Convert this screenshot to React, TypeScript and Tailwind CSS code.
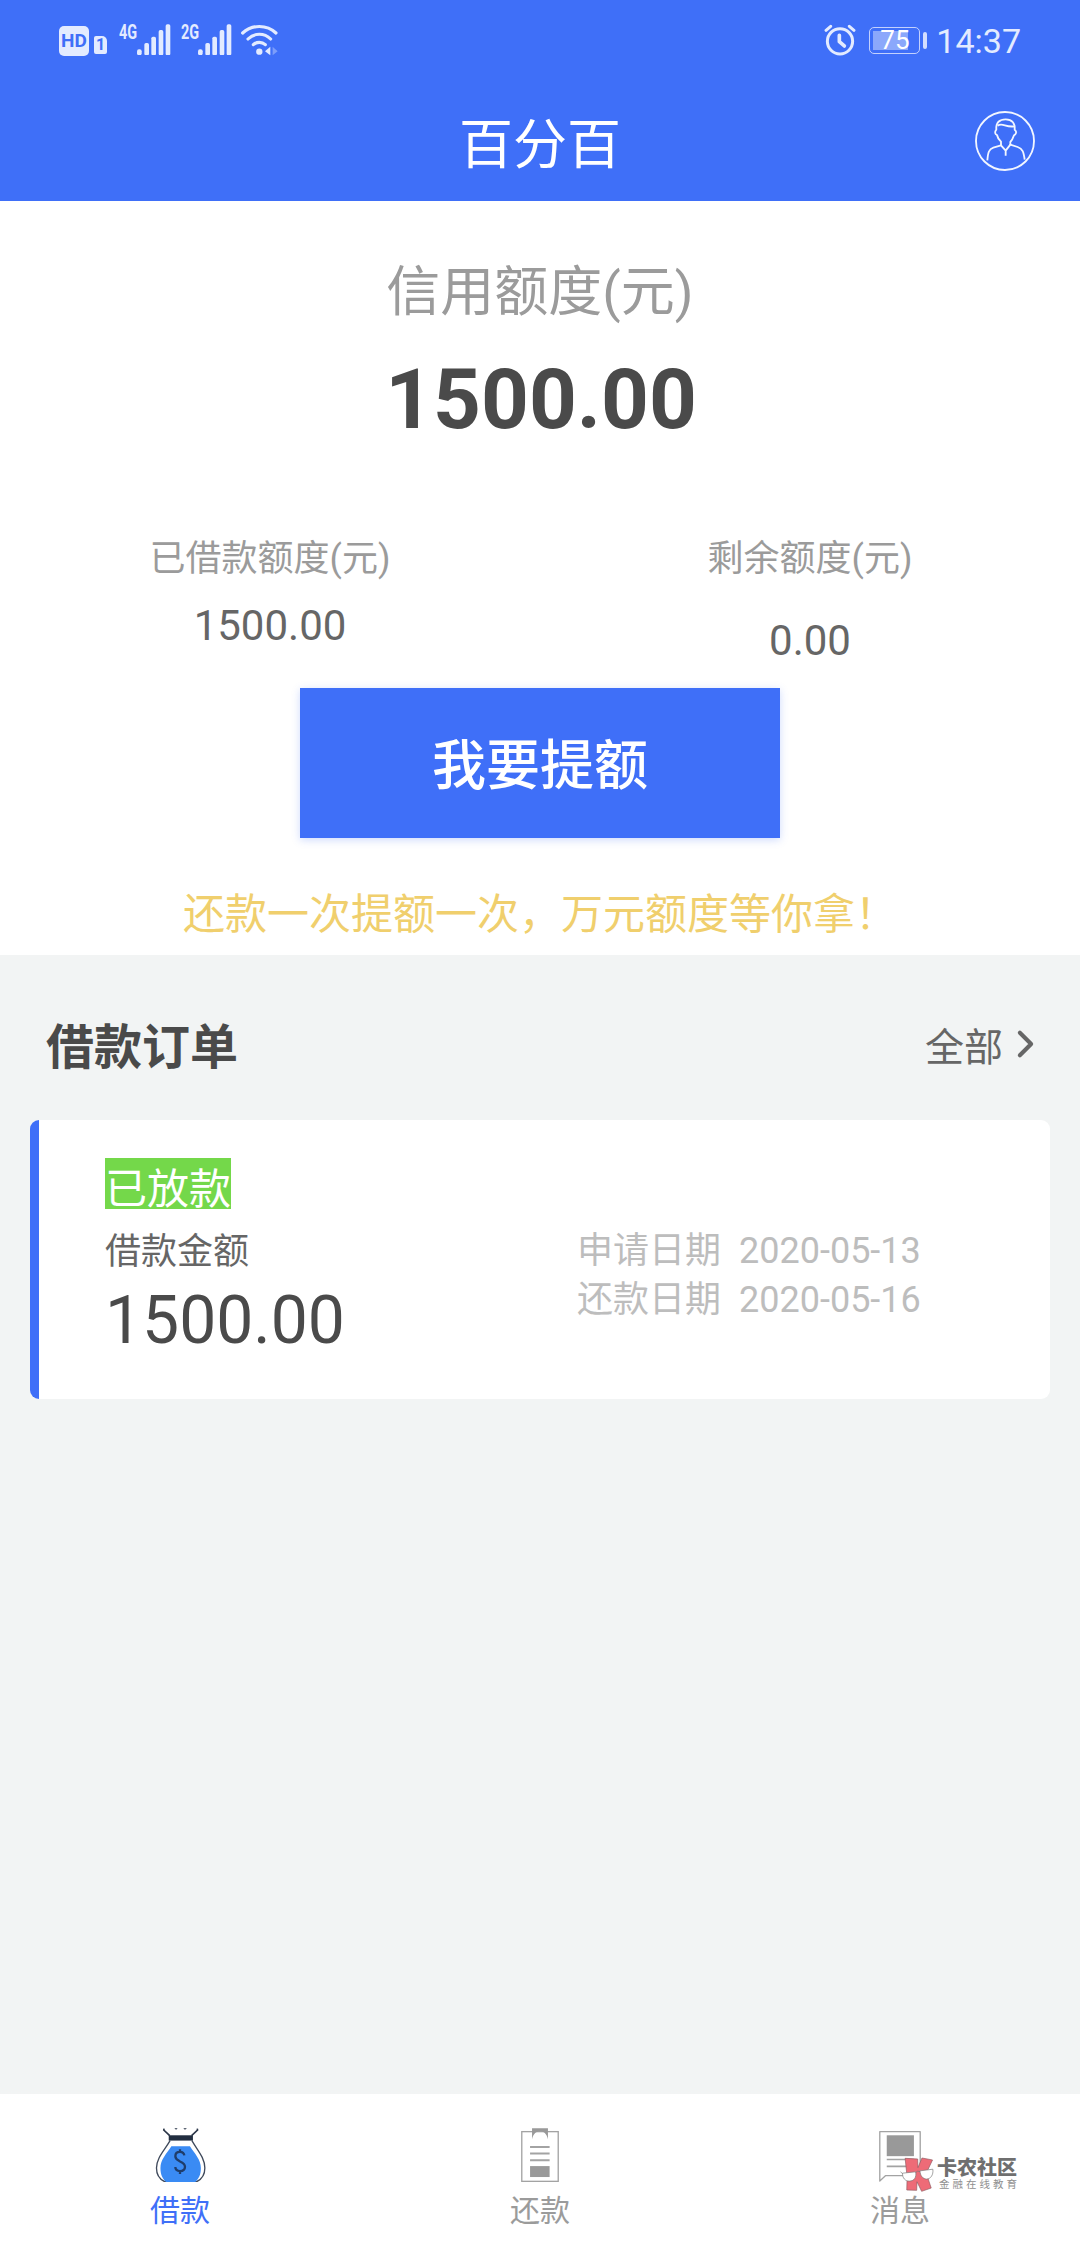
import { ChevronRight } from "lucide-react";

function SignalBars() {
  return (
    <svg viewBox="0 0 102 94" className="w-[34px] h-[31.3px]" fill="#e3ebff">
      <rect x="0" y="76" width="14" height="18" rx="6" />
      <rect x="22" y="57" width="14" height="37" rx="5" />
      <rect x="43" y="38" width="14" height="56" rx="5" />
      <rect x="65" y="18" width="14" height="76" rx="5" />
      <rect x="86" y="1" width="14" height="93" rx="5" />
    </svg>
  );
}

function WifiIcon() {
  return (
    <svg
      viewBox="598 72 112 96"
      className="w-[37.3px] h-[32px]"
      fill="none"
      stroke="#e3ebff"
      strokeWidth="9.5"
      strokeLinecap="round"
    >
      <path d="M603 99 C630 73 676 73 703 99" />
      <path d="M619 117 C638 98 668 98 687 117" />
      <path d="M635 134 C645 125 661 125 671 134" />
      <circle cx="653" cy="155" r="9.5" fill="#e3ebff" stroke="none" />
      <path d="M686 140 V166 L670 154 Z" fill="#e3ebff" stroke="none" />
      <path d="M693 140 V166 L708 154 Z" fill="#7c9dfa" stroke="none" />
    </svg>
  );
}

function AlarmIcon() {
  return (
    <svg
      viewBox="72 72 96 98"
      className="w-[32px] h-[32.6px]"
      fill="none"
      stroke="#e3ebff"
      strokeWidth="9"
      strokeLinecap="round"
      strokeLinejoin="round"
    >
      <circle cx="120" cy="124" r="38" />
      <path d="M118 106 V125 L133 138" strokeWidth="11" />
      <path d="M78 91 L92 79 M162 91 L148 79" />
    </svg>
  );
}

function StatusBar() {
  return (
    <div className="flex h-20 justify-between pl-[59px] pr-[59px] text-[#e3ebff]">
      <div className="flex items-start pt-[24px]">
        <div className="mt-[2px] flex h-[30px] w-[30px] items-center justify-center rounded-[5px] bg-[#e3ebff] text-[19px] font-bold leading-[30px] text-[#3f6ff8]">
          HD
        </div>
        <div className="ml-[5px] mt-[12px] flex h-[18px] w-[13px] items-center justify-center rounded-[2px] rounded-tr-[5px] bg-[#e3ebff] text-[16px] font-bold leading-[18px] text-[#3f6ff8]">
          1
        </div>
        <span className="ml-[12px] w-[18px] origin-left scale-x-[0.74] text-[19.5px] font-bold leading-[17px]">
          4G
        </span>
        <SignalBars />
        <span className="ml-[10px] w-[17px] origin-left scale-x-[0.74] text-[19.5px] font-bold leading-[17px]">
          2G
        </span>
        <SignalBars />
        <div className="ml-[9px]">
          <WifiIcon />
        </div>
      </div>
      <div className="flex items-start pt-[24px]">
        <AlarmIcon />
        <div className="relative ml-[13px] mt-[3px] h-[27px] w-[51px] rounded-[5px] border-[1.5px] border-[#c3d1fd] p-[3px]">
          <div className="h-full w-[35px] bg-[#8ba8fb]" />
          <span className="absolute left-[10px] top-0 text-[26px] leading-[24px] text-white">
            75
          </span>
        </div>
        <div className="ml-[3px] mt-[8px] h-[17px] w-[4px] rounded-[2px] bg-[#d3defe]" />
        <span className="ml-[9px] text-[34px] leading-[34px]">14:37</span>
      </div>
    </div>
  );
}

function ProfileIcon() {
  return (
    <svg
      viewBox="0 0 180 180"
      className="h-[60px] w-[60px]"
      fill="none"
      stroke="#f2f6ff"
      strokeWidth="5.5"
      strokeLinejoin="round"
    >
      <circle cx="90" cy="90" r="87" />
      <path d="M78 104 V92 C70 84 67 78 66 72 C60 70 58 62 64 56 C62 34 74 25 92 25 C112 25 121 38 119 56 C127 62 123 70 117 73 C114 82 111 88 106 93 V103" />
      <path d="M68 44 C82 34 92 50 118 46" />
      <path d="M37 148 C39 124 42 114 55 110 L78 103 L92 119 L106 101 L128 108 C143 113 146 124 149 146 M92 118 V134" />
    </svg>
  );
}

function MoneyBagIcon() {
  return (
    <svg viewBox="102 143 156 163" className="h-[54px] w-[52px]">
      <path
        d="M150 181 C135 208 109 232 109 264 C109 286 118 298 134 305 H230 C246 298 255 286 255 264 C255 232 231 208 216 181"
        fill="#fff"
        stroke="#3f4a5c"
        strokeWidth="4"
      />
      <path
        d="M154 198 H210 C224 220 243 238 243 264 C243 284 237 296 226 306 H138 C127 296 121 284 121 264 C121 238 140 220 154 198 Z"
        fill="#3a8bf4"
      />
      <path
        d="M132 145 L131 149 L149 166 M232 145 L233 149 L215 166"
        fill="none"
        stroke="#2b3648"
        strokeWidth="5"
      />
      <path d="M163 144 L168 148 L173 144 Z M190 144 L195 148 L201 144 Z" fill="#2b3648" />
      <rect x="146" y="165" width="73" height="16" fill="#222e40" />
      <path
        d="M193 226 C192 217 186 215 180 215 C171 215 166 220 166 228 C166 237 173 240 180 244 C189 248 195 252 195 260 C195 269 188 273 180 273 C171 273 166 269 166 261 M180 207 V216 M180 272 V282"
        fill="none"
        stroke="#1f3d6b"
        strokeWidth="7"
      />
    </svg>
  );
}

function ClipboardIcon() {
  return (
    <svg viewBox="102 143 156 163" className="h-[54px] w-[52px]">
      <rect x="125" y="154" width="110" height="150" fill="#fff" stroke="#a3a3a3" strokeWidth="4" />
      <path d="M156 144 H204 V177 C200 160 191 153 180 153 C169 153 160 160 156 177 Z" fill="#999" />
      <path d="M150 200 H209 M150 220 H209 M150 240 H209" stroke="#a3a3a3" strokeWidth="6" />
      <rect x="150" y="258" width="59" height="33" fill="#999" />
    </svg>
  );
}

function MessageIcon() {
  return (
    <svg viewBox="102 143 156 163" className="h-[54px] w-[52px]">
      <path
        d="M119 303 V154 H241 V287 H136 Z"
        fill="#fff"
        stroke="#a3a3a3"
        strokeWidth="4"
        strokeLinejoin="round"
      />
      <rect x="140" y="165" width="82" height="63" fill="#999" />
      <path d="M140 238 H222 M140 259 H222" stroke="#a3a3a3" strokeWidth="5" />
    </svg>
  );
}

function Watermark() {
  return (
    <div className="absolute left-[900px] top-[2157px] flex">
      <svg viewBox="180 230 105 106" className="h-[35px] w-[35px]">
        <g fill="#ee6b77" stroke="#8d5a60" strokeWidth="2" strokeLinejoin="round">
          <path d="M195 234 L233 236 L234 262 L246 233 L278 239 L259 279 L274 324 L245 334 L231 305 L230 331 L200 330 L201 290 Z" />
        </g>
        <g fill="#fff" stroke="#777" strokeWidth="2">
          <path d="M187 279 L227 275 C230 292 222 303 208 303 C195 303 187 294 187 279 Z" />
          <path d="M240 272 L279 267 C281 284 273 296 260 297 C248 296 241 287 240 272 Z" />
          <path d="M227 277 Q233 270 240 274 M181 275 L187 280" fill="none" />
        </g>
      </svg>
      <div className="ml-[2px] flex flex-col">
        <span className="text-[20px] font-black leading-[23px] text-[#6f6f6f]">卡农社区</span>
        <span className="ml-[2px] text-[10.5px] leading-[10px] tracking-[3px] text-[#8f8f8f]">
          金融在线教育
        </span>
      </div>
    </div>
  );
}

const tabs = [
  { label: "借款", icon: <MoneyBagIcon />, active: true },
  { label: "还款", icon: <ClipboardIcon />, active: false },
  { label: "消息", icon: <MessageIcon />, active: false },
];

const dates = [
  { label: "申请日期", value: "2020-05-13" },
  { label: "还款日期", value: "2020-05-16" },
];

export default function App() {
  return (
    <div className="relative flex h-[2244px] w-[1080px] flex-col overflow-hidden bg-[#f2f4f4] font-[Roboto,'Noto_Sans_CJK_SC',sans-serif]">
      <header className="h-[201px] bg-[#3f6ff8]">
        <StatusBar />
        <div className="grid grid-cols-3 items-start px-[45px]">
          <h1 className="col-start-2 pt-[30px] text-center text-[54px] leading-[72px] text-white">
            百分百
          </h1>
          <button className="justify-self-end pt-[31px]">
            <ProfileIcon />
          </button>
        </div>
      </header>

      <section className="flex h-[754px] flex-col items-center bg-white pt-[56px]">
        <p className="text-[54px] leading-[72px] text-[#9b9b9b]">信用额度(元)</p>
        <p className="mt-[21px] pl-[2px] text-[83.5px] font-bold leading-[100px] text-[#4a4a4a]">
          1500.00
        </p>
        <div className="mt-[84px] grid w-full grid-cols-2 text-center">
          <div>
            <p className="text-[36px] leading-[50px] text-[#9b9b9b]">已借款额度(元)</p>
            <p className="mt-[17px] text-[42px] leading-[50px] text-[#666]">1500.00</p>
          </div>
          <div>
            <p className="text-[36px] leading-[50px] text-[#9b9b9b]">剩余额度(元)</p>
            <p className="mt-[32px] text-[42px] leading-[50px] text-[#666]">0.00</p>
          </div>
        </div>
        <button className="mt-[22px] h-[150px] w-[480px] bg-[#3f6ff8] pt-[8px] text-[54px] font-medium leading-[72px] text-white shadow-[0_2px_8px_rgba(63,111,248,0.25)]">
          我要提额
        </button>
        <p className="mt-[47px] text-[42px] leading-[60px] text-[#f0cf6d]">
          还款一次提额一次，万元额度等你拿！
        </p>
      </section>

      <section className="flex-1 px-[30px] pt-[63px]">
        <div className="flex h-[60px] items-center justify-between pl-[16px] pr-[2px]">
          <h2 className="text-[48px] font-bold leading-[60px] text-[#4a4a4a]">借款订单</h2>
          <a className="flex h-[60px] items-center text-[39px] leading-[60px] text-[#666]">
            全部
            <ChevronRight className="mb-[8px] h-[54px] w-[45px]" strokeWidth={2.2} />
          </a>
        </div>

        <div className="mt-[42px] flex h-[279px] rounded-[9px] border-l-[9px] border-[#3f6ff8] bg-white pl-[66px]">
          <div className="w-[472px] pt-[38px]">
            <span className="block h-[51px] w-[126px] bg-[#74d84a] pt-[13px] text-[42px] leading-[38px] text-white">
              已放款
            </span>
            <p className="mt-[19px] text-[36px] leading-[48px] text-[#666]">借款金额</p>
            <p className="mt-[5px] text-[66px] leading-[80px] text-[#4a4a4a]">1500.00</p>
          </div>
          <div className="pt-[107px] text-[36px] leading-[49px] text-[#bdbdbd]">
            {dates.map((d) => (
              <p key={d.label} className="flex gap-[18px]">
                <span>{d.label}</span>
                <span>{d.value}</span>
              </p>
            ))}
          </div>
        </div>
      </section>

      <nav className="grid h-[150px] grid-cols-3 bg-white">
        {tabs.map((t) => (
          <div key={t.label} className="flex flex-col items-center pt-[34px]">
            {t.icon}
            <span
              className={`mt-[5px] text-[30px] leading-[48px] ${
                t.active ? "text-[#3f6ff8]" : "text-[#9b9b9b]"
              }`}
            >
              {t.label}
            </span>
          </div>
        ))}
      </nav>
      <Watermark />
    </div>
  );
}
